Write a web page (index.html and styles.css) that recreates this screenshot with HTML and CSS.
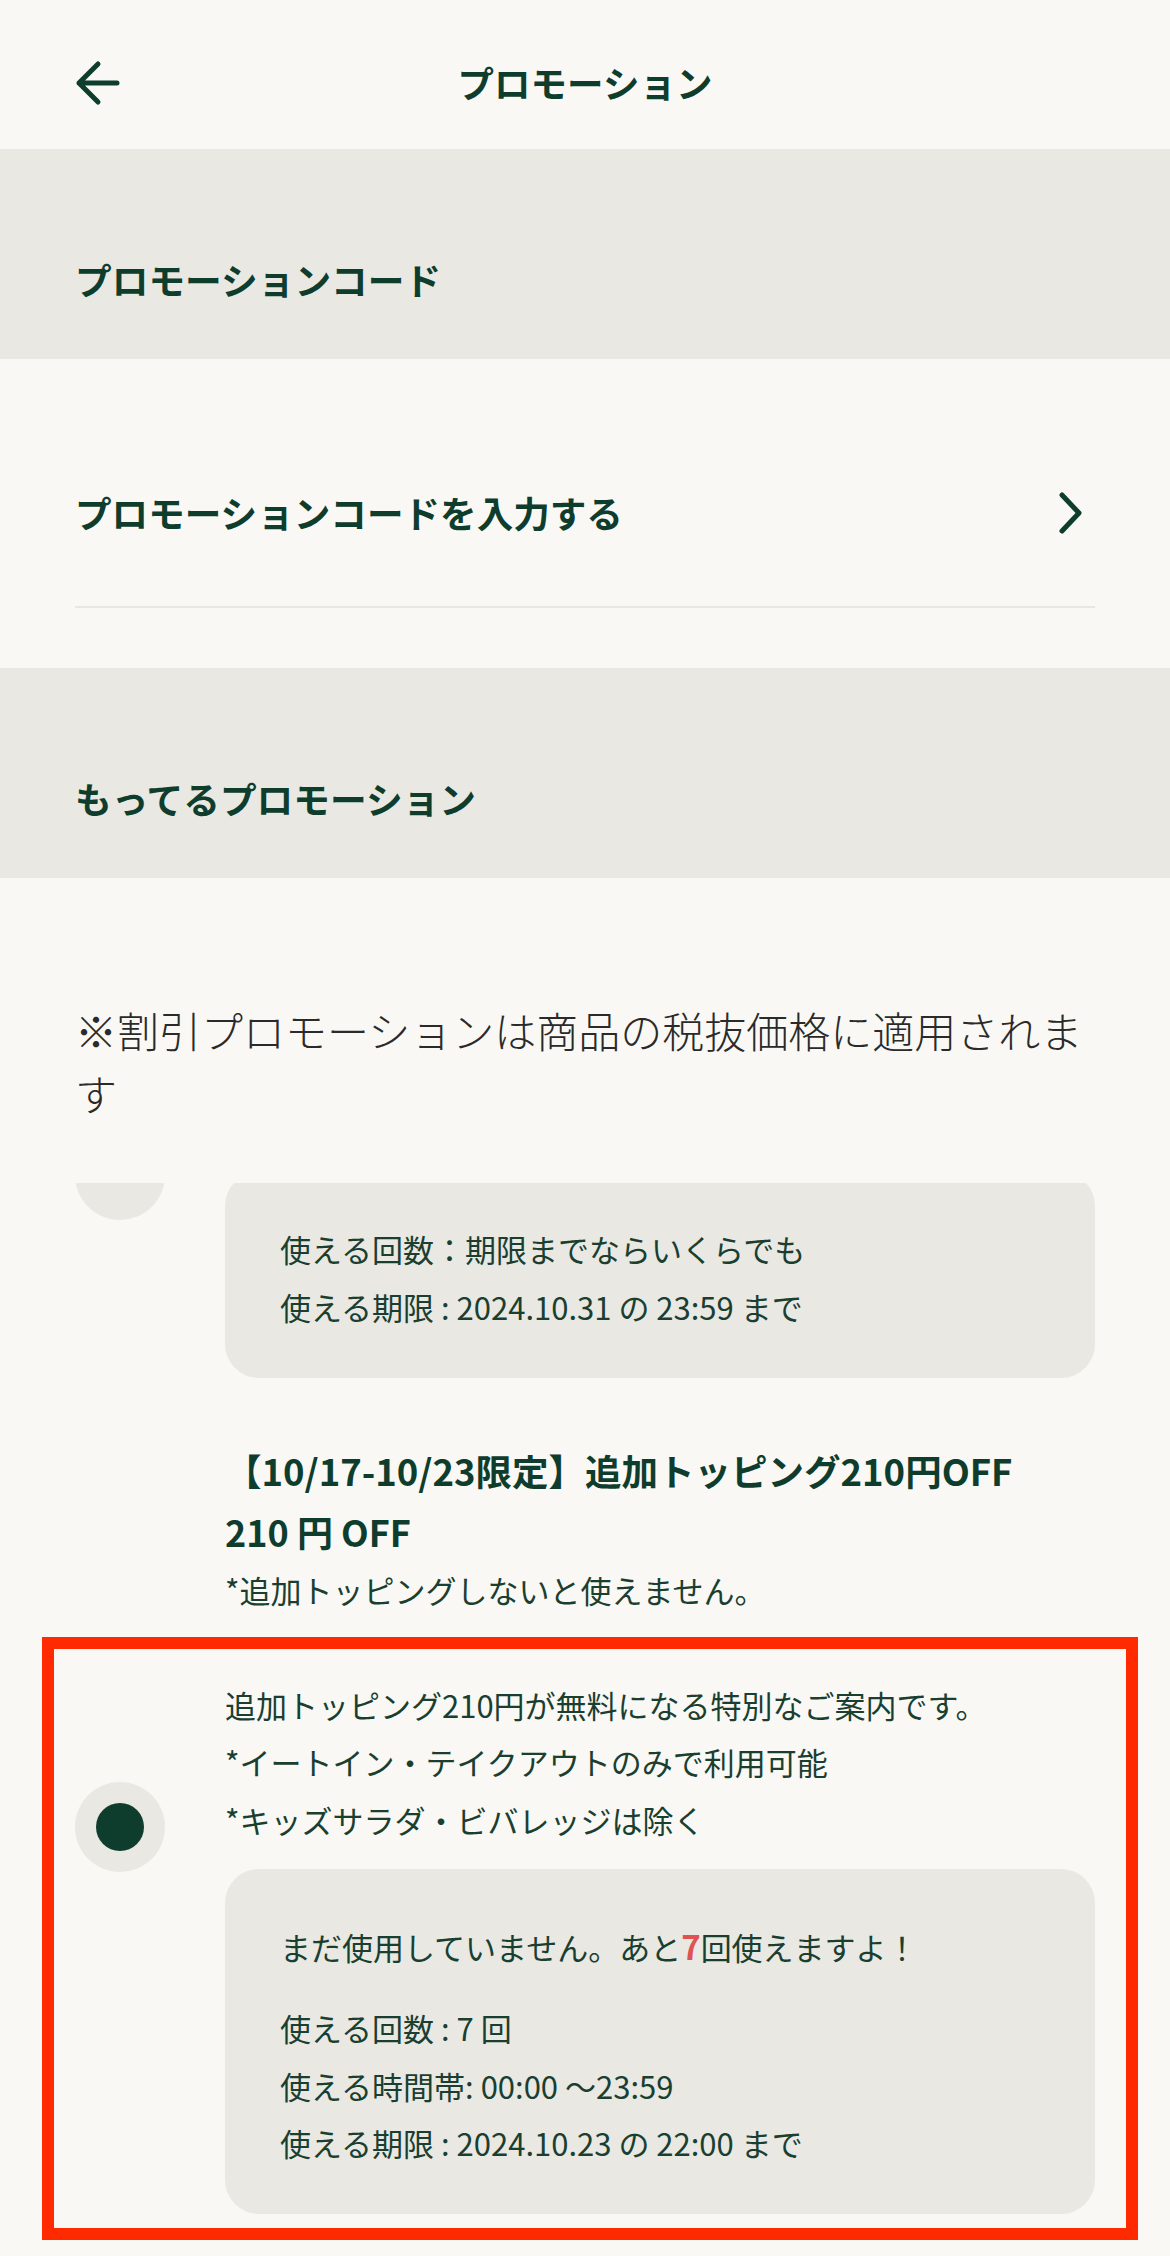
FILE: index.html
```html
<!DOCTYPE html>
<html lang="ja">
<head>
<meta charset="utf-8">
<title>プロモーション</title>
<link rel="stylesheet" href="styles.css">
</head>
<body>
<div class="page">
  <header class="topbar">
    <div class="topbar-left">
      <svg class="back-icon" width="46" height="46" viewBox="0 0 46 46" aria-hidden="true">
        <path d="M42 23 H4 M23 4 L4 23 L23 42" fill="none" stroke="#0f3d2d" stroke-width="5" stroke-linecap="round" stroke-linejoin="round"/>
      </svg>
    </div>
    <h1 class="topbar-title">プロモーション</h1>
    <div class="topbar-right"></div>
  </header>

  <section class="band"><h2 class="band-title">プロモーションコード</h2></section>

  <div class="code-row-wrap">
    <div class="code-row">
      <span class="code-row-label">プロモーションコードを入力する</span>
      <svg class="chevron" width="26" height="42" viewBox="0 0 26 42" aria-hidden="true">
        <path d="M4 3 L21 21 L4 39" fill="none" stroke="#0f3d2d" stroke-width="5" stroke-linecap="round" stroke-linejoin="round"/>
      </svg>
    </div>
  </div>

  <section class="band"><h2 class="band-title">もってるプロモーション</h2></section>

  <p class="note">※割引プロモーションは商品の税抜価格に適用されます</p>

  <div class="list-viewport">
    <div class="list">
      <div class="promo">
        <div class="radio"></div>
        <div class="promo-body">
          <div class="promo-head-scrolled"></div>
          <div class="usage">
            <div class="usage-line">使える回数：期限までならいくらでも</div>
            <div class="usage-line">使える期限 : 2024.10.31 の 23:59 まで</div>
          </div>
        </div>
      </div>

      <div class="promo">
        <div class="radio"><div class="radio-dot"></div></div>
        <div class="promo-body">
          <div class="promo-title">【10/17-10/23限定】追加トッピング210円OFF</div>
          <div class="promo-amount">210 円 OFF</div>
          <div class="promo-desc">*追加トッピングしないと使えません。<br><br>追加トッピング210円が無料になる特別なご案内です。<br>*イートイン・テイクアウトのみで利用可能<br>*キッズサラダ・ビバレッジは除く</div>
          <div class="usage">
            <div class="usage-message">まだ使用していません。あと<span class="count">7</span>回使えますよ！</div>
            <div class="usage-line">使える回数 : 7 回</div>
            <div class="usage-line">使える時間帯: 00:00 〜23:59</div>
            <div class="usage-line">使える期限 : 2024.10.23 の 22:00 まで</div>
          </div>
        </div>
      </div>
    </div>
  </div>

  <div class="highlight-frame"></div>
</div>
</body>
</html>
```

FILE: styles.css
```css
* { box-sizing: border-box; }

html, body {
  margin: 0;
  padding: 0;
  background: #f9f8f4;
}

body {
  font-family: "Noto Sans CJK JP", "Noto Sans", sans-serif;
  color: #1e3932;
}

.page {
  position: relative;
  width: 1170px;
  height: 2256px;
  overflow: hidden;
  background: #f9f8f4;
}

/* Header */
.topbar {
  height: 149px;
  display: grid;
  grid-template-columns: 1fr auto 1fr;
  align-items: center;
  padding: 16px 75px 0;
}

.topbar-left {
  display: flex;
  align-items: center;
}

.back-icon { display: block; }

.topbar-title {
  margin: 0;
  font-size: 36.5px;
  font-weight: 700;
  line-height: 54px;
  color: #0f3d2d;
}

/* Grey section bands */
.band {
  background: #e9e8e3;
  height: 210px;
  padding: 103px 75px 0;
}

.band-title {
  margin: 0;
  font-size: 36.7px;
  font-weight: 700;
  line-height: 54px;
  color: #0f3d2d;
}

/* Promotion code row */
.code-row-wrap {
  padding: 0 75px;
  margin-bottom: 60px;
}

.code-row {
  display: flex;
  align-items: center;
  justify-content: space-between;
  padding: 127px 11px 66px 0;
  border-bottom: 2px solid #e8e7e2;
}

.code-row-label {
  font-size: 36.6px;
  font-weight: 700;
  line-height: 54px;
  color: #0f3d2d;
}

.chevron { display: block; }

/* Note */
.note {
  margin: 0 0 59px;
  padding: 120px 75px 0;
  font-size: 42px;
  line-height: 63px;
  font-weight: 300;
  color: #2a2a2a;
}

/* Promotion list (scrolled) */
.list-viewport {
  height: 1072px;
  overflow: hidden;
}

.list {
  margin-top: -210px;
  padding: 0 75px;
  display: flex;
  flex-direction: column;
  gap: 63px;
}

.promo {
  display: flex;
  align-items: center;
  gap: 60px;
}

.radio {
  flex: none;
  width: 90px;
  height: 90px;
  border-radius: 50%;
  background: #e9e8e3;
  display: flex;
  align-items: center;
  justify-content: center;
}

.radio-dot {
  width: 48px;
  height: 48px;
  border-radius: 50%;
  background: #0f3d2d;
}

.promo-body {
  flex: 1;
  min-width: 0;
}

/* title area of the first promotion, scrolled out of view */
.promo-head-scrolled {
  height: 198.5px;
}

.promo-title {
  font-size: 36.5px;
  font-weight: 700;
  line-height: 60px;
  color: #0f3d2d;
  white-space: nowrap;
}

.promo-amount {
  font-size: 36px;
  font-weight: 700;
  line-height: 60px;
  color: #0f3d2d;
}

.promo-desc {
  font-size: 31px;
  line-height: 57.5px;
  color: #1a3f31;
  margin-bottom: 21px;
}

.usage {
  background: #e9e8e3;
  border-radius: 34px;
  padding: 48.5px 40px 42.5px 55px;
}

.usage-message {
  font-size: 31px;
  line-height: 57.5px;
  color: #1a3f31;
  margin-bottom: 24px;
}

.count {
  color: #e05252;
  font-weight: 700;
  font-size: 33px;
  line-height: 0;
}

.usage-line {
  font-size: 31px;
  line-height: 57.5px;
  color: #1a3f31;
}

/* Annotation frame over the selected promotion */
.highlight-frame {
  position: absolute;
  left: 42px;
  top: 1637px;
  width: 1096px;
  height: 603px;
  border: 12.5px solid #ff2a00;
  pointer-events: none;
}
```
